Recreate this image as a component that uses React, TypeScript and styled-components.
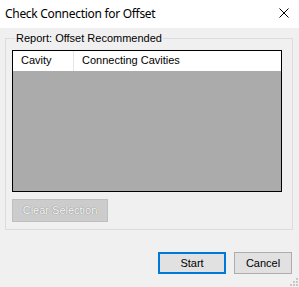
import React from "react";
import styled, { createGlobalStyle } from "styled-components";

const Global = createGlobalStyle`
  html, body { margin: 0; padding: 0; background: #f0f0f0; }
  * { box-sizing: border-box; }
`;

const Window = styled.div`
  width: 299px;
  height: 287px;
  background: #f0f0f0;
  display: flex;
  flex-direction: column;
  font-family: "Liberation Sans", Arial, sans-serif;
  font-size: 11px;
  color: #000;
  position: relative;
  overflow: hidden;
`;

const TitleBar = styled.div`
  height: 28px;
  background: #ffffff;
  display: flex;
  align-items: center;
  justify-content: space-between;
  padding: 0 10px 0 5px;
`;

const Title = styled.div`
  font-family: "Noto Sans", "Open Sans", sans-serif;
  font-size: 12px;
  letter-spacing: -0.3px;
  color: #000;
  margin-top: -1px;
`;

const CloseBox = styled.div`
  width: 10px;
  height: 10px;
  display: flex;
  margin-top: -3px;
`;

const Body = styled.div`
  flex: 1;
  display: flex;
  flex-direction: column;
  padding: 10px 6px 0 5px;
`;

const Group = styled.div`
  border: 1px solid #dcdcdc;
  height: 192px;
  display: flex;
  flex-direction: column;
  padding: 0 10px 0 6px;
`;

const Caption = styled.div`
  align-self: flex-start;
  margin: -7px 0 0 3px;
  padding: 0 1px 0 1px;
  background: #f0f0f0;
  line-height: 13px;
`;

const List = styled.div`
  margin-top: 5px;
  height: 142px;
  border: 1px solid #000;
  background: #ababab;
  display: flex;
  flex-direction: column;
`;

const Header = styled.div`
  height: 20px;
  background: #fff;
  display: flex;
`;

const HeaderCell = styled.div<{ $w?: number }>`
  ${(p) => (p.$w ? `width: ${p.$w}px;` : "flex: 1;")}
  padding: 3px 0 0 8px;
  border-right: 1px solid ${(p) => (p.$w ? "#e5e5e5" : "transparent")};
  line-height: 13px;
`;

const ClearButton = styled.div`
  margin-top: 7px;
  width: 96px;
  height: 23px;
  background: #cccccc;
  border: 1px solid #bfbfbf;
  color: #f8f8f8;
  text-shadow: 0 0 1px #8c8c8c, 0 0 1px #8c8c8c;
  display: flex;
  align-items: center;
  justify-content: center;
  padding-bottom: 1px;
`;

const Footer = styled.div`
  display: flex;
  justify-content: flex-end;
  gap: 8px;
  padding: 22px 1px 0 0;
`;

const Button = styled.div<{ $default?: boolean; $w: number }>`
  width: ${(p) => p.$w}px;
  height: 22px;
  background: #e1e1e1;
  border: ${(p) => (p.$default ? "2px solid #0078d7" : "1px solid #adadad")};
  display: flex;
  align-items: center;
  justify-content: center;
  padding-bottom: 1px;
`;

const Grip = styled.svg`
  position: absolute;
  right: 1px;
  bottom: 1px;
`;

export default function App() {
  return (
    <>
      <Global />
      <Window>
        <TitleBar>
          <Title>Check Connection for Offset</Title>
          <CloseBox>
            <svg width="10" height="10" viewBox="0 0 10 10">
              <path d="M0.5 0.5 L9.5 9.5 M9.5 0.5 L0.5 9.5" stroke="#000" strokeWidth="1" />
            </svg>
          </CloseBox>
        </TitleBar>
        <Body>
          <Group>
            <Caption>Report: Offset Recommended</Caption>
            <List>
              <Header>
                <HeaderCell $w={61}>Cavity</HeaderCell>
                <HeaderCell>Connecting Cavities</HeaderCell>
              </Header>
            </List>
            <ClearButton>Clear Selection</ClearButton>
          </Group>
          <Footer>
            <Button $default $w={68}>Start</Button>
            <Button $w={58}>Cancel</Button>
          </Footer>
        </Body>
        <Grip width="10" height="10" viewBox="0 0 10 10">
          {[
            [8, 2], [8, 5], [8, 8], [5, 5], [5, 8], [2, 8],
          ].map(([x, y], i) => (
            <rect key={i} x={x} y={y} width="2" height="2" fill="#c8c8c8" />
          ))}
        </Grip>
      </Window>
    </>
  );
}
